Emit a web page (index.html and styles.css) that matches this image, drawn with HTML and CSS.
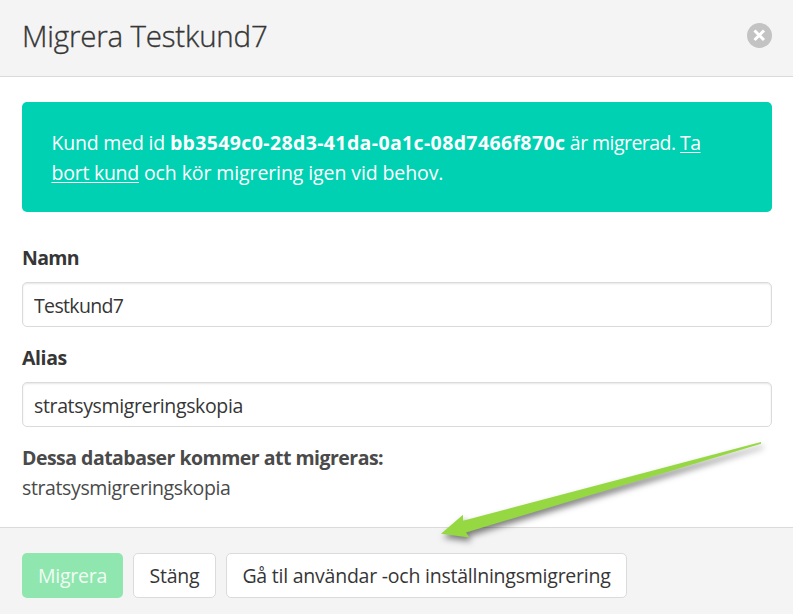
FILE: index.html
```html
<!DOCTYPE html>
<html lang="sv">
<head>
<meta charset="utf-8">
<title>Migrera Testkund7</title>
<link rel="stylesheet" href="styles.css">
</head>
<body>
<div class="modal">
  <header class="modal-head">
    <h1 class="title"><span>Migrera Testkund7</span></h1>
    <button class="close" aria-label="Stäng dialogen">
      <svg viewBox="0 0 25 25" width="25" height="25"><path d="M7.500 7.500l9.500 9.500M17 7.500l-9.500 9.500" stroke="#fff" stroke-width="3" fill="none"/></svg>
    </button>
  </header>
  <main class="modal-body">
    <div class="notice">
      <div class="line"><span class="n1">Kund med id </span><strong class="n2">bb3549c0-28d3-41da-0a1c-08d7466f870c</strong><span class="n3"> är migrerad. <a>Ta</a></span></div>
      <div class="line"><a class="n4">bort kund</a><span class="n5"> och kör migrering igen vid behov.</span></div>
    </div>
    <label class="label" for="name"><span class="l1">Namn</span></label>
    <input class="input i1" id="name" value="Testkund7">
    <label class="label" for="alias"><span class="l2">Alias</span></label>
    <input class="input i2" id="alias" value="stratsysmigreringskopia">
    <div class="databases">
      <div><strong class="d1">Dessa databaser kommer att migreras:</strong></div>
      <div><span class="d2">stratsysmigreringskopia</span></div>
    </div>
  </main>
  <footer class="modal-foot">
    <button class="button primary"><span>Migrera</span></button>
    <button class="button cancel"><span>Stäng</span></button>
    <button class="button wide"><span>Gå til användar -och inställningsmigrering</span></button>
  </footer>
  <svg class="arrow" viewBox="0 0 340 110" width="340" height="110"><path d="M330 12L330 13.800L35 102.500L38.500 107.500L10 103.700L32 84.700L32 90.700Z" fill="#96d841"/></svg>
</div>
</body>
</html>
```
FILE: styles.css
```css
* { box-sizing: border-box; }
body {
  margin: 0;
  font: 19.5px/30px "Open Sans", "Noto Sans", sans-serif;
  color: #4a4a4a;
}
.modal { position: relative; height: 614px; display: flex; flex-direction: column; overflow: hidden; background: #fff; }
.modal-head {
  height: 77px; flex: none; padding: 0 21px 5px 22px;
  display: flex; align-items: center; justify-content: space-between;
  background: #f4f4f4; border-bottom: 1px solid #dbdbdb;
}
.title {
  margin: 0; padding-top: 1px; font-size: 29.500px; font-weight: 300; line-height: 30px;
  letter-spacing: -.18px; color: #363636; white-space: nowrap;
  -webkit-text-stroke: .35px #363636;
}
.close { width: 25px; height: 25px; padding: 0; border: 0; border-radius: 50%; background: #c3c3c3; }
.close svg { display: block; }
.modal-body { flex: 1; padding: 25px 21px 0 22px; }
.notice { height: 110px; padding: 26px 29.500px; margin-bottom: 31px; border-radius: 5px; background: #00d1b2; color: #fff; }
.notice a { text-decoration: underline; text-decoration-thickness: 1px; text-underline-offset: 2px; }
.line { white-space: pre; }
.n1 { letter-spacing: -.2px; }
.n2 { letter-spacing: .37px; }
.n3 { letter-spacing: -.55px; }
.n4 { letter-spacing: -.25px; }
.n5 { letter-spacing: -.1px; }
.l1 { letter-spacing: -.7px; }
.l2 { letter-spacing: -.4px; }
.d1 { letter-spacing: -.52px; }
.d2 { letter-spacing: -.38px; }
.label { display: block; height: 30px; margin-bottom: 9px; font-weight: 700; color: #363636; }
.input {
  display: block; width: 100%; height: 45px; margin-bottom: 16px; padding: 2px 11px 0;
  font: inherit; color: #363636; background: #fff;
  border: 1px solid #dbdbdb; border-radius: 5px;
  box-shadow: inset 0 1px 2px rgba(10, 10, 10, .1);
}
.i1 { letter-spacing: -.65px; }
.i2 { letter-spacing: -.36px; }
.modal-foot {
  height: 87px; flex: none; padding: 25px 22px 0; display: flex; gap: 10px;
  background: #f4f4f4; border-top: 1px solid #dbdbdb;
}
.button {
  height: 45px; padding: 0; font: inherit; white-space: nowrap; color: #363636; letter-spacing: -.23px;
  background: #fff; border: 1px solid #dbdbdb; border-radius: 5px;
}
.primary { width: 101px; border-color: transparent; background: #8fe6ae; color: #f0fcf4; }
.cancel { width: 83px; }
.wide { width: 401px; }
.arrow { position: absolute; left: 431px; top: 430px; filter: drop-shadow(2px 4px 3px rgba(0, 0, 0, .5)); pointer-events: none; }
```
